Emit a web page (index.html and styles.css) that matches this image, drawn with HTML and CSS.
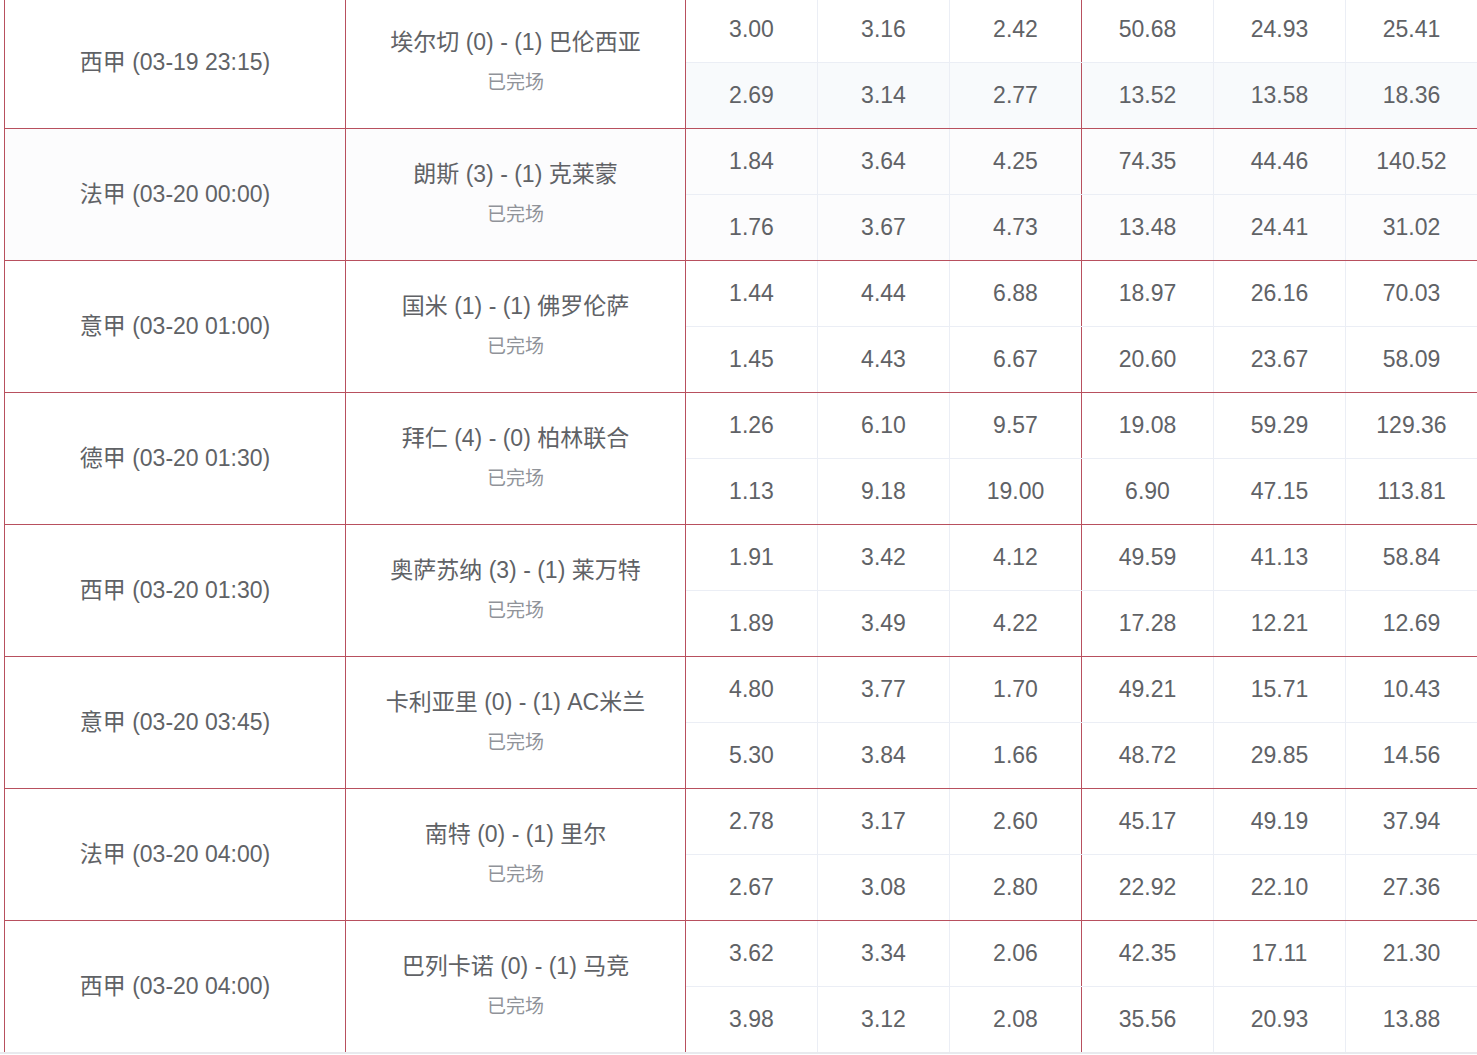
FILE: index.html
```html
<!DOCTYPE html>
<html lang="zh-CN">
<head>
<meta charset="utf-8">
<title>赔率</title>
<link rel="stylesheet" href="styles.css">
</head>
<body>
<div class="board">
  <div class="match">
    <div class="league">西甲 (03-19 23:15)</div>
    <div class="game"><div class="teams">埃尔切 (0) - (1) 巴伦西亚</div><div class="status">已完场</div></div>
    <div class="odds">
      <div class="row"><span>3.00</span><span>3.16</span><span class="sep">2.42</span><span>50.68</span><span>24.93</span><span>25.41</span></div>
      <div class="row tint-blue"><span>2.69</span><span>3.14</span><span class="sep">2.77</span><span>13.52</span><span>13.58</span><span>18.36</span></div>
    </div>
  </div>
  <div class="match tint">
    <div class="league">法甲 (03-20 00:00)</div>
    <div class="game"><div class="teams">朗斯 (3) - (1) 克莱蒙</div><div class="status">已完场</div></div>
    <div class="odds">
      <div class="row"><span>1.84</span><span>3.64</span><span class="sep">4.25</span><span>74.35</span><span>44.46</span><span>140.52</span></div>
      <div class="row"><span>1.76</span><span>3.67</span><span class="sep">4.73</span><span>13.48</span><span>24.41</span><span>31.02</span></div>
    </div>
  </div>
  <div class="match">
    <div class="league">意甲 (03-20 01:00)</div>
    <div class="game"><div class="teams">国米 (1) - (1) 佛罗伦萨</div><div class="status">已完场</div></div>
    <div class="odds">
      <div class="row"><span>1.44</span><span>4.44</span><span class="sep">6.88</span><span>18.97</span><span>26.16</span><span>70.03</span></div>
      <div class="row"><span>1.45</span><span>4.43</span><span class="sep">6.67</span><span>20.60</span><span>23.67</span><span>58.09</span></div>
    </div>
  </div>
  <div class="match">
    <div class="league">德甲 (03-20 01:30)</div>
    <div class="game"><div class="teams">拜仁 (4) - (0) 柏林联合</div><div class="status">已完场</div></div>
    <div class="odds">
      <div class="row"><span>1.26</span><span>6.10</span><span class="sep">9.57</span><span>19.08</span><span>59.29</span><span>129.36</span></div>
      <div class="row"><span>1.13</span><span>9.18</span><span class="sep">19.00</span><span>6.90</span><span>47.15</span><span>113.81</span></div>
    </div>
  </div>
  <div class="match">
    <div class="league">西甲 (03-20 01:30)</div>
    <div class="game"><div class="teams">奥萨苏纳 (3) - (1) 莱万特</div><div class="status">已完场</div></div>
    <div class="odds">
      <div class="row"><span>1.91</span><span>3.42</span><span class="sep">4.12</span><span>49.59</span><span>41.13</span><span>58.84</span></div>
      <div class="row"><span>1.89</span><span>3.49</span><span class="sep">4.22</span><span>17.28</span><span>12.21</span><span>12.69</span></div>
    </div>
  </div>
  <div class="match">
    <div class="league">意甲 (03-20 03:45)</div>
    <div class="game"><div class="teams">卡利亚里 (0) - (1) AC米兰</div><div class="status">已完场</div></div>
    <div class="odds">
      <div class="row"><span>4.80</span><span>3.77</span><span class="sep">1.70</span><span>49.21</span><span>15.71</span><span>10.43</span></div>
      <div class="row"><span>5.30</span><span>3.84</span><span class="sep">1.66</span><span>48.72</span><span>29.85</span><span>14.56</span></div>
    </div>
  </div>
  <div class="match">
    <div class="league">法甲 (03-20 04:00)</div>
    <div class="game"><div class="teams">南特 (0) - (1) 里尔</div><div class="status">已完场</div></div>
    <div class="odds">
      <div class="row"><span>2.78</span><span>3.17</span><span class="sep">2.60</span><span>45.17</span><span>49.19</span><span>37.94</span></div>
      <div class="row"><span>2.67</span><span>3.08</span><span class="sep">2.80</span><span>22.92</span><span>22.10</span><span>27.36</span></div>
    </div>
  </div>
  <div class="match">
    <div class="league">西甲 (03-20 04:00)</div>
    <div class="game"><div class="teams">巴列卡诺 (0) - (1) 马竞</div><div class="status">已完场</div></div>
    <div class="odds">
      <div class="row"><span>3.62</span><span>3.34</span><span class="sep">2.06</span><span>42.35</span><span>17.11</span><span>21.30</span></div>
      <div class="row"><span>3.98</span><span>3.12</span><span class="sep">2.08</span><span>35.56</span><span>20.93</span><span>13.88</span></div>
    </div>
  </div>
</div>
<div class="bottom-line"></div>
</body>
</html>
```

FILE: styles.css
```css
html, body {
  margin: 0;
  padding: 0;
  overflow: hidden;
  background: #ffffff;
}

body {
  font-family: "Liberation Sans", "Noto Sans CJK SC", sans-serif;
  color: #606266;
  font-size: 23px;
}

.board {
  margin: -4px 0 0 4px;
  border-left: 1px solid #b8505e;
  width: 1474px;
}

.match {
  display: grid;
  grid-template-columns: 341px 340px 792px;
  border-top: 1px solid #b8505e;
}

.match.tint {
  background: #fcfcfd;
}

.league {
  display: flex;
  align-items: center;
  justify-content: center;
  border-right: 1px solid #b8505e;
  padding-bottom: 6px;
}

.game {
  display: flex;
  flex-direction: column;
  align-items: center;
  justify-content: center;
  border-right: 1px solid #b8505e;
  padding-bottom: 1px;
}

.teams {
  line-height: 40px;
}

.status {
  margin-top: 2px;
  line-height: 38px;
  font-size: 19px;
  color: #909399;
}

.odds {
  display: flex;
  flex-direction: column;
}

.row {
  display: grid;
  grid-template-columns: repeat(6, 132px);
}

.row:first-child {
  border-bottom: 1px solid #ebeef5;
}

.row.tint-blue {
  background: #f8fafc;
}

.row span {
  height: 65px;
  line-height: 65px;
  text-align: center;
  border-right: 1px solid #ebeef5;
}

.row span.sep {
  border-right-color: #b8505e;
}

.bottom-line {
  height: 2px;
  background: #e8eaee;
}
```
